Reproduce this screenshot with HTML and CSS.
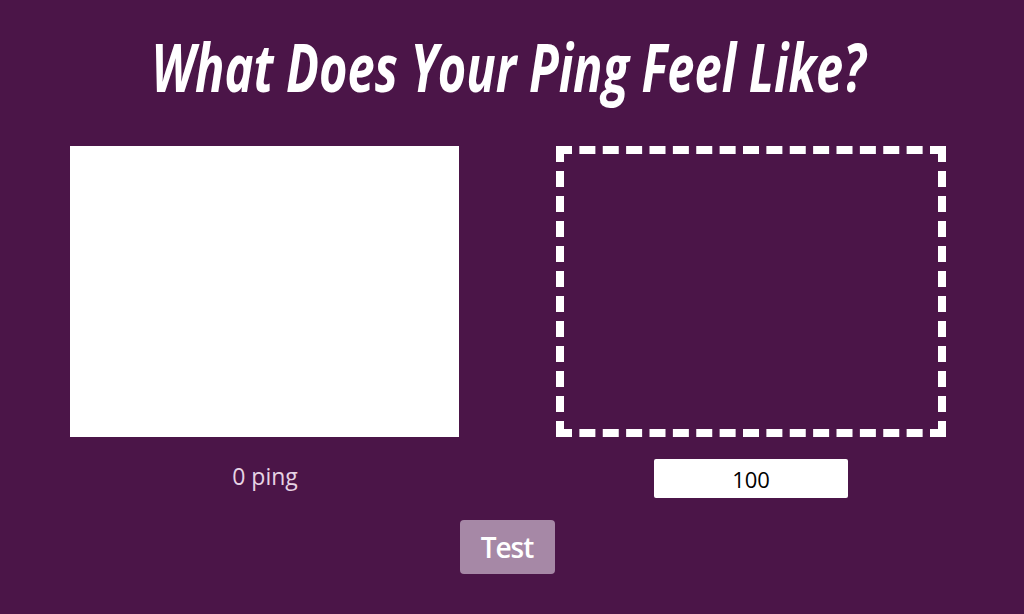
FILE: index.html
```html
<!DOCTYPE html>
<html>
<head>
<meta charset="utf-8">
<link rel="stylesheet" href="styles.css">
</head>
<body>
<h1 class="title">What Does Your Ping Feel Like?</h1>
<div class="panels">
  <div class="col">
    <div class="box solid"></div>
    <div class="label">0 ping</div>
  </div>
  <div class="col">
    <div class="box dashed"></div>
    <input class="ping-input" type="text" value="100">
  </div>
</div>
<div class="actions">
  <button class="btn">Test</button>
</div>
</body>
</html>
```
FILE: styles.css
```css
html, body {
  margin: 0;
  padding: 0;
  background: #4b1548;
  height: 100%;
  overflow: hidden;
}
body {
  font-family: "Open Sans", "Liberation Sans", sans-serif;
}
.title {
  margin: 0;
  padding-top: 26px;
  height: 120px;
  box-sizing: border-box;
  text-align: center;
  color: #ffffff;
  font-family: "Open Sans", sans-serif;
  font-weight: 700;
  font-style: italic;
  font-size: 66px;
  line-height: 80px;
  letter-spacing: 0;
  transform: scaleX(0.738);
  transform-origin: 499px 0;
  white-space: nowrap;
}
.panels {
  display: flex;
  justify-content: space-between;
  padding: 26px 78px 0 70px;
}
.col {
  width: 390px;
  display: flex;
  flex-direction: column;
  align-items: center;
}
.box {
  width: 390px;
  height: 291px;
  box-sizing: border-box;
}
.solid {
  background: #ffffff;
  width: 389px;
  align-self: flex-start;
}
.dashed {
  border: 8px dashed #ffffff;
}
.label {
  margin-top: 24px;
  color: #e6d3e4;
  font-size: 23px;
  line-height: 30px;
}
.ping-input {
  margin-top: 22px;
  width: 194px;
  height: 39px;
  box-sizing: border-box;
  border: none;
  border-radius: 2px;
  background: #ffffff;
  color: #000;
  text-align: center;
  font-family: "Open Sans", sans-serif;
  font-size: 22px;
  padding: 0;
  outline: none;
}
.actions {
  display: flex;
  justify-content: center;
  padding-top: 22px;
  padding-right: 10px;
}
.btn {
  width: 95px;
  height: 54px;
  border: none;
  border-radius: 4px;
  background: #a688a6;
  color: #ffffff;
  font-family: "Open Sans", sans-serif;
  font-size: 28px;
  font-weight: 600;
  letter-spacing: -1px;
  padding: 0;
}
```
